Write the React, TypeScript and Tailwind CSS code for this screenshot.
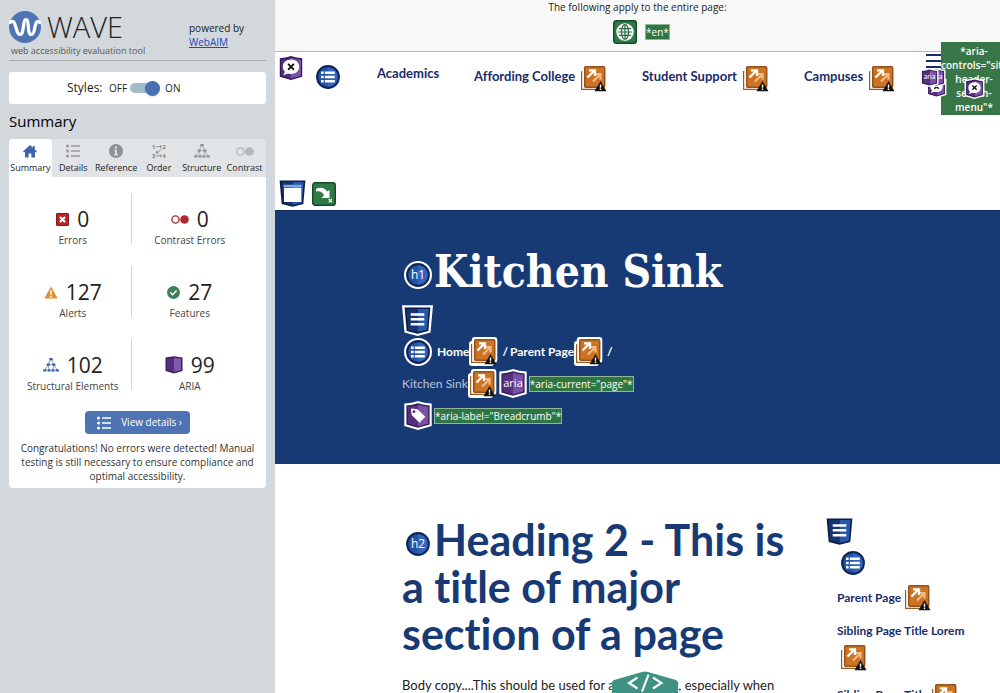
import type { ReactNode } from "react";

const SANS = "font-['Open_Sans','Noto_Sans',sans-serif]";
const SITE = "font-['Lato','Open_Sans',sans-serif]";

function WaveLogo() {
  return (
    <svg viewBox="0 0 32 32" className="size-8 shrink-0" aria-hidden="true">
      <circle cx="16" cy="16" r="16" fill="#4f74b3" />
      <path
        d="M1 11.500C4 9 5.500 11 6.500 15C8 20 8.500 23.500 11 23.500C15.500 23.500 13.500 8.500 17 8.500C20.500 8.500 18 23.500 22 23.500C25.500 23.500 25 19 26.200 15C27.200 11 28.500 9 31 11.500"
        fill="none"
        stroke="#fff"
        strokeWidth="3.200"
        strokeLinecap="round"
      />
    </svg>
  );
}

function ListGlyph({ className }: { className: string }) {
  return (
    <svg viewBox="0 0 14 14" className={className} fill="currentColor" aria-hidden="true">
      <circle cx="1.500" cy="2" r="1.500" />
      <circle cx="1.500" cy="7" r="1.500" />
      <circle cx="1.500" cy="12" r="1.500" />
      <path d="M5 1.300h9v1.400H5zM5 6.300h9v1.400H5zM5 11.300h9v1.400H5z" />
    </svg>
  );
}

function TreeGlyph({ className }: { className: string }) {
  return (
    <svg viewBox="0 0 16 14" className={className} aria-hidden="true">
      <path
        d="M8 1L5 6.500L2 12M8 1L11 6.500L14 12M5 6.500L6.200 12M11 6.500L9.800 12M5 6.500h6"
        stroke="currentColor"
        strokeWidth="0.600"
        fill="none"
      />
      <path
        fill="currentColor"
        d="M6.300 0h3.400v2.200H6.300zM3.600 5.500h3.200v2.200H3.600zM9.200 5.500h3.200v2.200H9.200zM0.300 11.300h3.200v2.200H0.300zM4.500 11.300h3.100v2.200H4.500zM8.500 11.300h3.100v2.200H8.500zM12.600 11.300h3.200v2.200h-3.200z"
      />
    </svg>
  );
}

function HomeGlyph() {
  return (
    <svg viewBox="0 0 14 13" className="h-[13px] w-3.5" fill="#3f66ad" aria-hidden="true">
      <path d="M7 0L0 6.600L0.900 7.600L2 6.700V12.500H5.600V8.500H8.400V12.500H12V6.700L13.100 7.600L14 6.600L11.800 4.500V1H9.900V2.700Z" />
    </svg>
  );
}

function InfoGlyph() {
  return (
    <svg viewBox="0 0 14 14" className="size-3.5" aria-hidden="true">
      <circle cx="7" cy="7" r="7" fill="#8f9294" />
      <path d="M6 2.600h2v2H6zM5.300 5.800H8v4.300h1v1.300H5.200v-1.300h1V7.100h-.9z" fill="#e0e4e7" />
    </svg>
  );
}

function OrderGlyph() {
  return (
    <svg viewBox="0 0 14 14" className="size-3.5 overflow-visible" aria-hidden="true">
      <g fill="#777" fontSize="5.500" fontWeight="700">
        <text x="0" y="4.600">1</text>
        <text x="10.500" y="4.600">2</text>
        <text x="0" y="13.800">3</text>
        <text x="10.500" y="13.800">4</text>
      </g>
      <path
        d="M4 2.600h5.500M8 1.200l1.500 1.400L8 4M4 11.800h5.500M8 10.400l1.500 1.400L8 13.200M9.500 5.200L4.500 9M4.500 6.800V9h2.200"
        stroke="#888"
        strokeWidth="0.900"
        fill="none"
      />
    </svg>
  );
}

function ContrastGlyph({ className }: { className: string }) {
  return (
    <svg viewBox="0 0 18 9" className={className} aria-hidden="true">
      <circle cx="4.500" cy="4.500" r="3.600" fill="none" stroke="currentColor" strokeWidth="1.400" />
      <circle cx="13.500" cy="4.500" r="4.300" fill="currentColor" />
    </svg>
  );
}

function ErrorGlyph() {
  return (
    <svg viewBox="0 0 13 13" className="size-[13px]" aria-hidden="true">
      <rect x="0.500" y="0.500" width="12" height="12" rx="0.500" fill="#b9252b" stroke="#7f1a1f" />
      <path d="M4 4l5 5M9 4l-5 5" stroke="#fff" strokeWidth="2" />
    </svg>
  );
}

function AlertGlyph() {
  return (
    <svg viewBox="0 0 14 13" className="h-[13px] w-3.5" aria-hidden="true">
      <path d="M7 0.500L13.700 12.600H0.300Z" fill="#dc9433" />
      <path d="M6.100 4.300h1.800L7.600 9H6.400zM6.200 9.900h1.600v1.500H6.200z" fill="#fff" />
    </svg>
  );
}

function FeatureGlyph() {
  return (
    <svg viewBox="0 0 13 13" className="size-[13px]" aria-hidden="true">
      <circle cx="6.500" cy="6.500" r="6.500" fill="#3f7d5b" />
      <path d="M3.300 6.500l2.300 2.300l4-4.200" stroke="#fff" strokeWidth="1.500" fill="none" />
    </svg>
  );
}

function AriaGlyph() {
  return (
    <svg viewBox="0 0 18 18" className="size-[18px]" aria-hidden="true">
      <path d="M0.500 1.500L9 0.300L17.500 1.500V15L9 17.500L0.500 15Z" fill="#3d2163" />
      <path d="M9 2L16 2.600V14L9 16Z" fill="#8059a8" />
      <path d="M2 2.600L9 2V16L2 14Z" fill="#52307f" />
    </svg>
  );
}

function RedundantLink() {
  return (
    <svg viewBox="0 0 29 29" className="size-[29px] shrink-0" role="img" aria-label="Redundant link">
      <rect x="0" y="4" width="25" height="25" rx="3" fill="#fff" />
      <rect x="2.800" y="0" width="25.500" height="26" rx="3" fill="#fff" />
      <path d="M2.600 7V25.400H20" fill="none" stroke="#955a26" strokeWidth="1.200" />
      <rect x="5.700" y="2.700" width="20" height="20.500" rx="1" fill="#cc7424" stroke="#91521d" strokeWidth="1.500" />
      <path d="M14 17.500L20.500 11M16 10H21.500V15.500" stroke="#f4bd88" strokeWidth="2.100" fill="none" />
      <path d="M8.500 13.500L14.500 7.500M10 6.300H16V12" stroke="#fff" strokeWidth="2.300" fill="none" />
      <path d="M21.500 17L27.500 27.300H15.500Z" fill="#111" />
      <path d="M20.800 20.500h1.400v3.300h-1.400zM20.800 24.600h1.400v1.400h-1.400z" fill="#fff" />
    </svg>
  );
}

function CircleBadge({ label }: { label?: string }) {
  return (
    <svg viewBox="0 0 28 28" className="size-7 shrink-0" role="img" aria-label={label ?? "List"}>
      <circle cx="14" cy="14" r="14" fill="#fff" />
      <circle cx="14" cy="14" r="11.900" fill="#0e2456" />
      <circle cx="14" cy="14" r="9.800" fill="#2454a8" />
      <path d="M14 4.200A9.800 9.800 0 0 1 14 23.800Z" fill="#3164ba" />
      {label ? (
        <text x="14" y="18.300" textAnchor="middle" fontSize="12" fill="#fff">
          {label}
        </text>
      ) : (
        <path
          fill="#fff"
          d="M7 8.500h2.600v2.400H7zM7 12.800h2.600v2.400H7zM7 17.100h2.600v2.400H7zM10.800 8.500h10v2.400h-10zM10.800 12.800h10v2.400h-10zM10.800 17.100h10v2.400h-10z"
        />
      )}
    </svg>
  );
}

function Landmark({ kind }: { kind: "header" | "nav" }) {
  return (
    <svg viewBox="0 0 31 31" className="size-[31px] shrink-0" role="img" aria-label={kind}>
      <path d="M0 0.300H31L28.500 27.500L15.500 31L2.500 27.500Z" fill="#fff" />
      <path d="M2.600 2.500H28.400L26.300 25.900L15.500 28.700L4.700 25.900Z" fill="#0b1b4b" />
      <path d="M15.500 4H26.700L24.900 24.700L15.500 27.100Z" fill="#2858aa" />
      <path d="M15.500 4H4.300L6.100 24.700L15.500 27.100Z" fill="#17346f" />
      {kind === "nav" ? (
        <path d="M8.700 8.300h13.600v2.500H8.700zM8.700 13.100h13.600v2.500H8.700zM8.700 17.900h13.600v2.500H8.700z" fill="#fff" />
      ) : (
        <>
          <path d="M6.500 6.800h18v2.400h-18z" fill="#7fa8e8" />
          <path d="M7 9.800h17.300v14.200H7z" fill="#fff" />
        </>
      )}
    </svg>
  );
}

function HexBadge({ kind, className }: { kind: "aria" | "tag" | "hidden"; className: string }) {
  return (
    <svg viewBox="0 0 28 29" className={className} role="img" aria-label={kind}>
      <path d="M0.300 2.500Q8 2.300 14 0Q20 2.300 27.700 2.500V25L14 29L0.300 25Z" fill="#fff" />
      <path d="M2.400 4.500Q8.500 4 14 2.200Q19.500 4 25.600 4.500V23.500L14 26.800L2.400 23.500Z" fill="#331956" />
      <path d="M14 3.800Q19 5.300 24.300 5.700V22.500L14 25.400Z" fill="#7b51a5" />
      <path d="M14 3.800Q9 5.300 3.700 5.700V22.500L14 25.400Z" fill="#54307f" />
      {kind === "aria" && (
        <text x="14" y="17.500" textAnchor="middle" fontSize="11" fill="#fff">
          aria
        </text>
      )}
      {kind === "tag" && (
        <>
          <path d="M7 8.500Q7 7.500 8 7.500L13.500 8.200L21.300 15.800L15.500 21.700L7.600 14Z" fill="#fff" />
          <circle cx="10" cy="10.700" r="1.400" fill="#54307f" />
        </>
      )}
      {kind === "hidden" && (
        <>
          <path d="M14 5.800C19 5.800 22.500 9 22.500 13.300S19 20.800 14 20.800C12.800 20.800 11.700 20.600 10.700 20.300L6 22L7.800 18.500C6.300 17.200 5.500 15.300 5.500 13.300C5.500 9 9 5.800 14 5.800Z" fill="#fff" />
          <path d="M11 10.300l6 6M17 10.300l-6 6" stroke="#111" strokeWidth="1.900" />
        </>
      )}
    </svg>
  );
}

function LanguageBadge() {
  return (
    <svg viewBox="0 0 24 24" className="size-6 shrink-0" role="img" aria-label="Language">
      <rect x="0.700" y="0.700" width="22.600" height="22.600" rx="2.500" fill="#2f7a48" stroke="#154a27" strokeWidth="1.400" />
      <circle cx="12" cy="12" r="8.700" fill="#fff" />
      <g fill="none" stroke="#256a3d" strokeWidth="1.200">
        <ellipse cx="12" cy="12" rx="3.500" ry="7.300" />
        <path d="M5 12h14M6 8.600h12M6 15.400h12M12 5v14" />
      </g>
    </svg>
  );
}

function SkipBadge() {
  return (
    <svg viewBox="0 0 24 24" className="size-6 shrink-0" role="img" aria-label="Skip link target">
      <rect x="0.700" y="0.700" width="22.600" height="22.600" rx="2.500" fill="#2f7a48" stroke="#154a27" strokeWidth="1.400" />
      <path d="M4 7C8 4.800 13 5.500 15 9.500L17.500 8V16H9.500L12 13.300C11 10.500 8 8.500 4 9.500Z" fill="#fff" />
      <path d="M16.700 17l3.300 3.300M20 17l-3.300 3.300" stroke="#fff" strokeWidth="1.100" />
    </svg>
  );
}

function Label({ children }: { children: ReactNode }) {
  return (
    <span className={`${SANS} whitespace-nowrap border border-[#8fb59b] bg-[#2f7542] text-[10px] leading-[14px] font-medium text-white`}>
      {children}
    </span>
  );
}

const tabs: { name: string; icon: ReactNode }[] = [
  { name: "Summary", icon: <HomeGlyph /> },
  { name: "Details", icon: <ListGlyph className="size-3.5 text-[#999]" /> },
  { name: "Reference", icon: <InfoGlyph /> },
  { name: "Order", icon: <OrderGlyph /> },
  { name: "Structure", icon: <TreeGlyph className="h-3.5 w-4 text-[#8d9092]" /> },
  { name: "Contrast", icon: <ContrastGlyph className="h-[9px] w-[18px] text-[#b4b7b9]" /> },
];

const stats: { name: string; count: number; icon: ReactNode }[] = [
  { name: "Errors", count: 0, icon: <ErrorGlyph /> },
  { name: "Contrast Errors", count: 0, icon: <ContrastGlyph className="h-[9px] w-[18px] text-[#b0282d]" /> },
  { name: "Alerts", count: 127, icon: <AlertGlyph /> },
  { name: "Features", count: 27, icon: <FeatureGlyph /> },
  { name: "Structural Elements", count: 102, icon: <TreeGlyph className="h-3.5 w-4 text-[#3b5fa5]" /> },
  { name: "ARIA", count: 99, icon: <AriaGlyph /> },
];

function Sidebar() {
  return (
    <aside className={`${SANS} w-[275px] shrink-0 bg-[#d3d8dc] px-[9px] pt-[11px] text-[#222]`}>
      <header className="flex h-[50px] justify-between border-b border-[#a9adb0]">
        <div>
          <div className="flex h-8 items-center gap-1.5">
            <WaveLogo />
            <span className="text-[29px] leading-8 font-light">WAVE</span>
          </div>
          <p className="pl-0.5 text-[9px] leading-4 text-[#555]">web accessibility evaluation tool</p>
        </div>
        <p className="w-[77px] pt-2.5 text-[10px] leading-[14px]">
          powered by
          <br />
          <a href="#webaim" className="text-[#2248b8] underline">WebAIM</a>
        </p>
      </header>

      <div className="mt-[11px] flex h-8 items-center rounded-[3px] bg-white pl-[58px]">
        <span className="w-[42px] text-xs">Styles:</span>
        <label className="flex items-center gap-[3px] text-[10px]">
          <span>OFF</span>
          <input type="checkbox" role="switch" defaultChecked aria-label="Styles" className="peer sr-only" />
          <span className="flex h-2.5 w-[30px] items-center justify-end rounded-full bg-[#9fbcc9]">
            <span className="size-[15px] rounded-full bg-[#4a70b2] shadow" />
          </span>
          <span className="pl-0.5">ON</span>
        </label>
      </div>

      <h2 className="mt-[5px] text-[15px] leading-6 text-black">Summary</h2>

      <div role="tablist" className="mt-1.5 grid h-[38px] grid-cols-6 rounded-t-[4px] bg-[#e0e4e7]">
        {tabs.map((tab, i) => (
          <button
            key={tab.name}
            type="button"
            role="tab"
            aria-selected={i === 0}
            className={`flex flex-col items-center text-[9px] leading-3 whitespace-nowrap ${i === 0 ? "rounded-t-[4px] bg-white" : ""}`}
          >
            <span className="mt-[5px] mb-1 flex h-3.5 items-center justify-center">{tab.icon}</span>
            {tab.name}
          </button>
        ))}
      </div>

      <section className="rounded-b-[4px] bg-white pt-4 pb-[5px]">
        <div className="grid grid-cols-2 gap-y-[22px] pr-[18px] pl-[6px]">
          {stats.map((stat, i) => (
            <div
              key={stat.name}
              className={`flex h-[51px] flex-col items-center pt-3 ${i % 2 === 0 ? "border-r border-[#d5d5d5]" : ""}`}
            >
              <div className="flex items-center gap-2">
                {stat.icon}
                <span className="text-[21px] leading-7">{stat.count}</span>
              </div>
              <span className="text-[10px] leading-3.5 whitespace-nowrap text-[#444]">{stat.name}</span>
            </div>
          ))}
        </div>
        <button
          type="button"
          className="mx-auto mt-[21px] flex h-[23px] items-center gap-2.5 rounded-[4px] bg-[#4f74b3] pr-2 pl-3 text-[10px] text-white"
        >
          <ListGlyph className="size-3.5" />
          View details ›
        </button>
        <p className="mt-[7px] px-2 text-center text-[10px] leading-3.5 text-[#333]">
          Congratulations! No errors were detected! Manual testing is still necessary to ensure compliance and optimal
          accessibility.
        </p>
      </section>
    </aside>
  );
}

function NavItem({ children }: { children: ReactNode }) {
  return (
    <a href="#nav" className="flex h-[29px] items-center gap-1 whitespace-nowrap">
      <span className="pb-1">{children}</span>
      <RedundantLink />
    </a>
  );
}

function SiteHeader() {
  return (
    <header className="relative h-[158px] px-0.5 pt-0.5 text-[#182c6b]">
      <div className="flex items-start text-[13px] font-bold">
        <HexBadge kind="hidden" className="h-7 w-7 shrink-0" />
        <div className="ml-[9px] pt-[9px]">
          <CircleBadge />
        </div>
        <nav className="grid flex-1 grid-cols-[97px_168px_162px_100px_1fr] items-start pt-2.5 pl-[35px]">
          <a href="#academics" className="leading-[19px]">Academics</a>
          <NavItem>Affording College</NavItem>
          <NavItem>Student Support</NavItem>
          <NavItem>Campuses</NavItem>
        </nav>
      </div>
      <button type="button" aria-label="Menu" className="absolute top-0.5 right-[58px] flex w-4 flex-col gap-1">
        <span className="h-0.5 bg-current" />
        <span className="h-0.5 bg-current" />
        <span className="h-0.5 bg-current" />
      </button>
      <div className={`${SANS} absolute -top-2.5 -right-[7px] flex h-[73px] w-[66px] items-center bg-[#387648] text-center text-[10px] leading-[14px] font-semibold text-white`}>
        <p className="w-full">*aria-controls="site-header-search-menu"*</p>
        <HexBadge kind="hidden" className="absolute top-9 left-[23px] size-[21px]" />
      </div>
      <HexBadge kind="hidden" className="absolute top-[25px] right-[53px] h-[21px] w-[21px]" />
      <HexBadge kind="aria" className="absolute top-4 right-[53px] h-[19px] w-[21px]" />
      <HexBadge kind="aria" className="absolute top-4 right-[60px] h-[19px] w-[21px]" />
      <div className="mt-[85px] flex items-center gap-1">
        <Landmark kind="header" />
        <SkipBadge />
      </div>
    </header>
  );
}

function Hero() {
  return (
    <section className="h-[254px] border-t border-[#0f2a5c] bg-[#183a74] pt-8 pl-[127px] text-xs text-white">
      <h1 className="mb-1 flex h-[58px] items-center gap-0.5 pl-0.5 font-['DejaVu_Serif_Condensed','DejaVu_Serif',serif] text-[44px] leading-[50px] font-bold whitespace-nowrap">
        <span className={`${SANS} pt-1.5 font-normal`}>
          <CircleBadge label="h1" />
        </span>
        Kitchen Sink
      </h1>
      <Landmark kind="nav" />
      <nav aria-label="Breadcrumb" className="mt-px flex flex-col gap-[3px]">
        <div className="flex h-[29px] items-center pl-0.5 font-bold">
          <CircleBadge />
          <a href="#home" className="pl-[5px]">Home</a>
          <RedundantLink />
          <span className="pr-0.5 pl-1">/</span>
          <a href="#parent">Parent Page</a>
          <RedundantLink />
          <span className="pr-0.5 pl-1">/</span>
        </div>
        <div className="flex h-[29px] items-center">
          <a href="#current" className="text-[#b8c4dc]">Kitchen Sink</a>
          <RedundantLink />
          <span className={`${SANS} px-0.5`}>
            <HexBadge kind="aria" className="h-[29px] w-7" />
          </span>
          <Label>*aria-current="page"*</Label>
        </div>
        <div className="flex h-[29px] items-center gap-0.5 pl-0.5">
          <HexBadge kind="tag" className="h-[29px] w-7" />
          <Label>*aria-label="Breadcrumb"*</Label>
        </div>
      </nav>
    </section>
  );
}

function Content() {
  return (
    <div className="flex items-start gap-[35px] pt-[52px] pl-[127px]">
      <article className="w-[390px] shrink-0">
        <h2 className="text-[43px] leading-[47px] font-bold whitespace-nowrap text-[#183a74]">
          <span className={`${SANS} mr-0.5 inline-block pl-0.5 align-[-2px] leading-7 font-normal`}>
            <CircleBadge label="h2" />
          </span>
          Heading 2 - This is
          <br />a title of major
          <br />
          section of a page
        </h2>
        <p className="mt-[18px] text-[13px] leading-5 whitespace-nowrap text-[#222]">
          Body copy....This should be used for all body text, especially when
        </p>
      </article>
      <aside className="flex-1 text-xs font-bold text-[#182c6b]">
        <div className="-ml-[3px]">
          <Landmark kind="nav" />
        </div>
        <div className="pl-[10px]">
          <div className="pt-0.5 pl-0.5">
            <CircleBadge />
          </div>
          <div className="mt-1.5 flex items-center gap-0.5">
            <a href="#parent">Parent Page</a>
            <RedundantLink />
          </div>
          <div className="mt-2.5">
            <a href="#sibling1" className="block leading-[18px] whitespace-nowrap">Sibling Page Title Lorem</a>
            <div className="mt-[3px] pl-0.5">
              <RedundantLink />
            </div>
          </div>
          <div className="mt-2.5 flex items-center gap-0.5">
            <a href="#sibling2" className="pb-1 whitespace-nowrap">Sibling Page Title</a>
            <RedundantLink />
          </div>
        </div>
      </aside>
    </div>
  );
}

export default function App() {
  return (
    <div className="flex h-screen overflow-hidden bg-white">
      <Sidebar />
      <main className={`${SITE} relative min-w-0 flex-1 overflow-hidden bg-white [font-variant-ligatures:none]`}>
        <div className={`${SANS} flex h-[52px] flex-col items-center border-b border-[#b5b5b5] bg-[#f8f8f8] text-[10px] text-[#222]`}>
          <p className="leading-[14px]">The following apply to the entire page:</p>
          <div className="mt-1.5 flex items-center gap-2 pl-2">
            <LanguageBadge />
            <Label>*en*</Label>
          </div>
        </div>
        <SiteHeader />
        <Hero />
        <Content />
        <button
          type="button"
          aria-label="Code panel"
          className="absolute bottom-0 left-[336px] h-[22px] w-[68px]"
        >
          <svg viewBox="0 0 68 22" className="h-full w-full" aria-hidden="true">
            <path d="M1 22V12Q1 9.500 4 8.800L31 1Q34 0 37 1L64 8.800Q67 9.500 67 12V22Z" fill="#3f9184" />
            <path d="M26.500 6.500L18 12L26.500 17.500M42 6.500L50.500 12L42 17.500M37.500 3.500L31 20.500" fill="none" stroke="#fff" strokeWidth="2.100" />
          </svg>
        </button>
      </main>
    </div>
  );
}
